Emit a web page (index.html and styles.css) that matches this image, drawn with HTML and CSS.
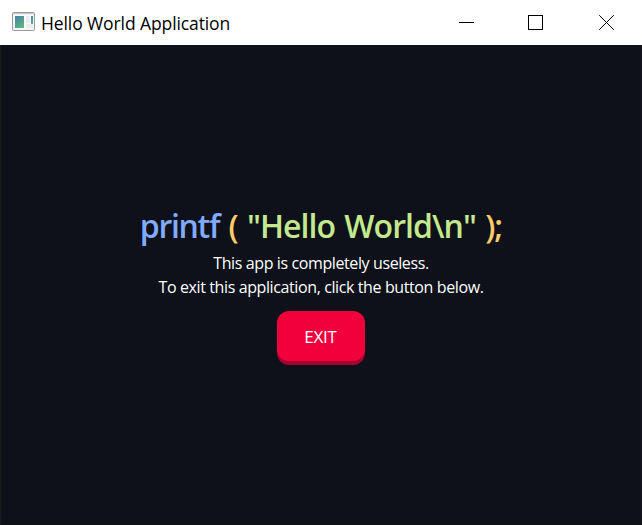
FILE: index.html
```html
<!DOCTYPE html>
<html lang="en">
<head>
<meta charset="utf-8">
<title>Hello World Application</title>
<link rel="stylesheet" href="styles.css">
</head>
<body>
<div class="window">
  <header class="titlebar">
    <svg class="app-icon" width="23" height="19" viewBox="0 0 23 19">
      <defs><linearGradient id="pane" x1="0" y1="0" x2=".5" y2="1"><stop offset="0" stop-color="#4b7fa8"/><stop offset="1" stop-color="#58b384"/></linearGradient></defs>
      <rect x=".5" y=".5" width="22" height="18" rx="1" fill="#f2f2f2" stroke="#999ba0"/>
      <path d="M1 1.5h21" stroke="#c3c6cc"/>
      <rect x="2" y="3" width="19" height="14" fill="#fafafa"/>
      <rect x="3" y="4" width="9" height="12" fill="url(#pane)"/>
      <path d="M14 4h4v7h-4zM14 12h7v4h-7z" fill="#ececec"/>
      <rect x="19" y="4" width="2" height="8" fill="url(#pane)"/>
    </svg>
    <span class="caption">Hello World Application</span>
    <div class="controls">
      <svg width="15" height="15" viewBox="0 0 15 15"><path d="M0 7.5h15" stroke="#000"/></svg>
      <svg width="15" height="15" viewBox="0 0 15 15"><rect x=".5" y=".5" width="14" height="14" fill="none" stroke="#000"/></svg>
      <svg width="15" height="15" viewBox="0 0 15 15"><path d="M.2.2l14.6 14.6M14.8.2L.2 14.8" stroke="#000"/></svg>
    </div>
  </header>
  <main class="content">
    <h1 class="code"><span class="fn">printf</span> <span class="paren">(</span> <span class="str">"Hello World\n"</span> <span class="paren">);</span></h1>
    <p class="line first">This app is completely useless.</p>
    <p class="line second">To exit this application, click the button below.</p>
    <button class="exit">EXIT</button>
  </main>
</div>
</body>
</html>
```
FILE: styles.css
```css
* { box-sizing: border-box; }
body { margin: 0; font-family: "Open Sans", "Noto Sans", sans-serif; }
.window { width: 642px; height: 525px; display: flex; flex-direction: column; background: #fff; }
.titlebar { height: 45px; display: flex; align-items: center; padding: 0 28px 0 12px; }
.app-icon { margin-top: -2px; }
.caption { margin-left: 6px; font-size: 17.5px; letter-spacing: -0.1px; line-height: 24px; white-space: nowrap; color: #000; }
.controls { margin-left: auto; display: grid; grid-template-columns: 69px 71px 15px; }
.controls svg { display: block; }
.content { flex: 1; display: flex; flex-direction: column; align-items: center; padding-top: 160px; background: #0e1119; border-left: 1px solid #181a1c; border-right: 1px solid #14151a; border-bottom: 1px solid #101012; }
.code { margin: 0; height: 46px; font-size: 32px; font-weight: 600; line-height: 42px; letter-spacing: -0.95px; word-spacing: 1.9px; white-space: nowrap; }
.fn { color: #82aaff; letter-spacing: -1.3px; }
.paren { color: #ffcb6b; }
.str { color: #c3e88d; }
.line { margin: 0; font-size: 16px; line-height: 24px; letter-spacing: -0.39px; color: #fff; white-space: nowrap; }
.exit { margin-top: 12px; width: 88px; height: 50px; padding: 0 1px 0 0; border: 0; border-radius: 12px; background: #f2003c; box-shadow: 0 4px 0 #a30030; color: #fff; font: 400 17px "Open Sans", sans-serif; letter-spacing: -0.2px; }
```
